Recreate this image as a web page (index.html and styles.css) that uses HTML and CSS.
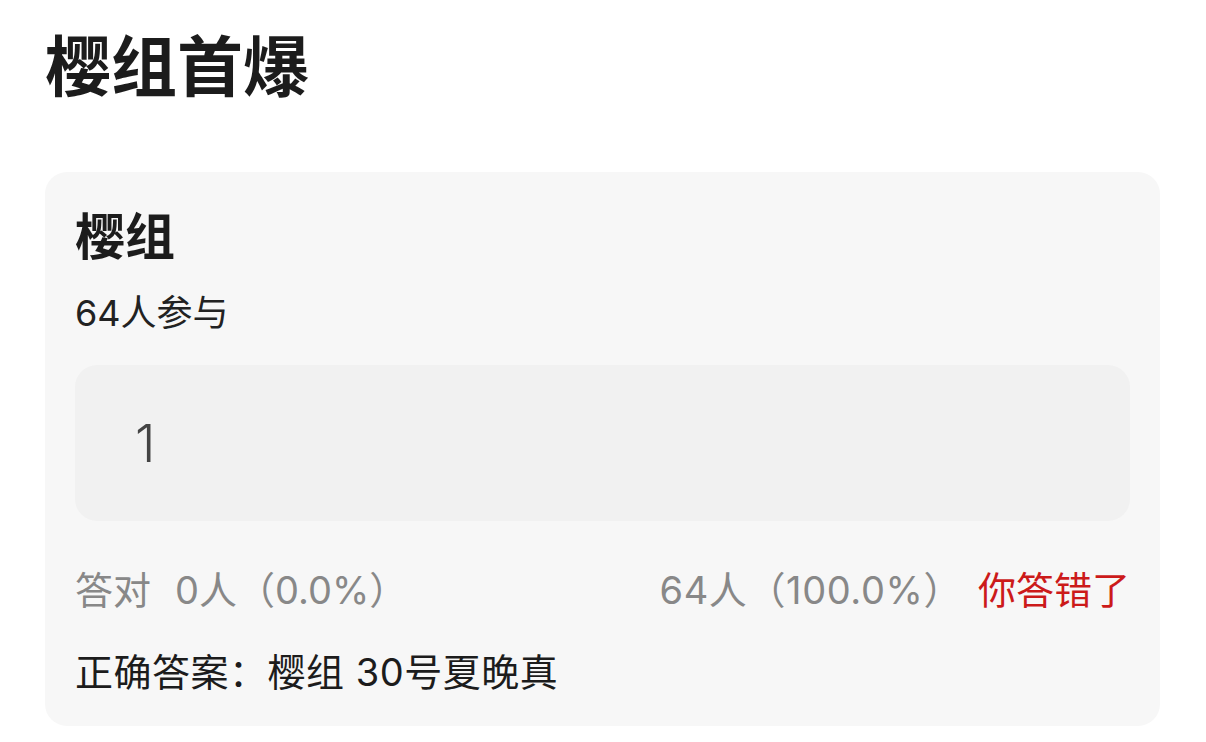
FILE: index.html
```html
<!DOCTYPE html>
<html lang="zh-CN">
<head>
<meta charset="utf-8">
<title>樱组首爆</title>
<link rel="stylesheet" href="styles.css">
</head>
<body>
<div class="page">
  <h1 class="title">樱组首爆</h1>
  <section class="card">
    <h2 class="card-title">樱组</h2>
    <div class="count">64人参与</div>
    <div class="answer-box"><span class="answer-text">1</span></div>
    <div class="stats">
      <div class="stat-left"><span class="stat-label">答对</span><span class="stat-value">0人（0.0%）</span></div>
      <div class="stat-right"><span class="stat-value stat-wide">64人（100.0%）</span><span class="wrong">你答错了</span></div>
    </div>
    <div class="correct">正确答案：樱组 30号夏晚真</div>
  </section>
</div>
</body>
</html>
```

FILE: styles.css
```css
html, body {
  margin: 0;
  padding: 0;
  background: #ffffff;
}
body {
  font-family: Inter, "Noto Sans CJK SC", sans-serif;
  color: #1f1f1f;
}
.page {
  padding: 28px 46px 0 45px;
}
.title {
  margin: 0;
  font-size: 66px;
  line-height: 78px;
  font-weight: 700;
  color: #1c1c1c;
}
.card {
  margin-top: 66px;
  background: #f7f7f7;
  border-radius: 22px;
  padding: 35px 30px 29px 30px;
}
.card-title {
  margin: 0;
  font-size: 50px;
  line-height: 60px;
  font-weight: 700;
  color: #1c1c1c;
}
.count {
  margin-top: 22px;
  font-size: 36px;
  line-height: 49px;
  color: #222;
}
.answer-box {
  margin-top: 27px;
  height: 156px;
  background: #f1f1f1;
  border-radius: 22px;
  display: flex;
  align-items: center;
  padding-left: 60px;
}
.answer-text {
  font-size: 52px;
  font-weight: 300;
  color: #444;
}
.stats {
  margin-top: 43px;
  display: flex;
  justify-content: space-between;
  align-items: center;
  font-size: 38px;
  line-height: 53px;
  color: #888888;
}
.stat-label {
  margin-right: 24px;
}
.stat-right {
  display: flex;
  align-items: center;
}
.stat-wide {
  letter-spacing: 0.6px;
}
.wrong {
  margin-left: 16px;
  color: #cc1a1a;
}
.correct {
  margin-top: 30px;
  font-size: 38px;
  line-height: 50px;
  letter-spacing: 0.5px;
  color: #1c1c1c;
}
```
